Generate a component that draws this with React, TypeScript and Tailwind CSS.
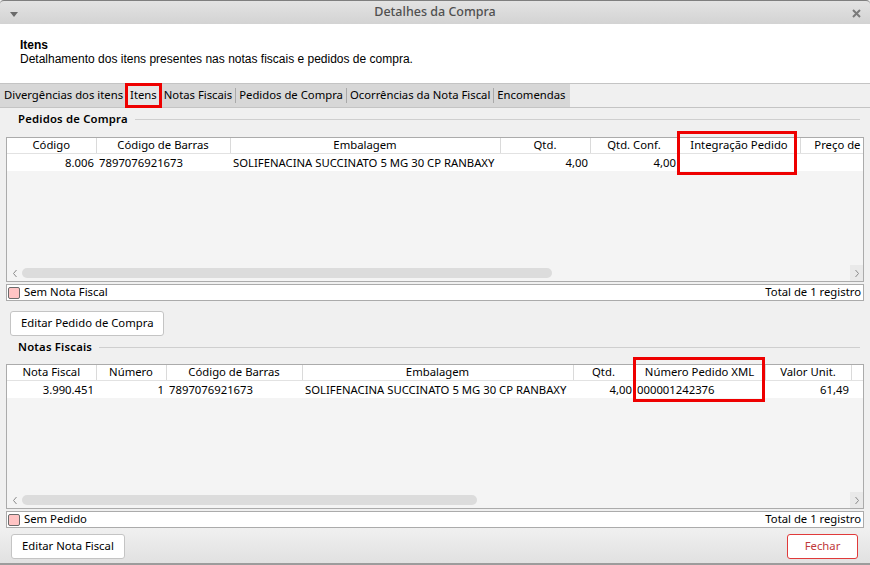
import React from 'react';

interface Col {
  label: string;
  w: string;
  value: string;
  align: 'left' | 'right';
}

const pedidoCols: Col[] = [
  { label: 'Código', w: 'w-[89px]', value: '8.006', align: 'right' },
  { label: 'Código de Barras', w: 'w-[134px]', value: '7897076921673', align: 'left' },
  { label: 'Embalagem', w: 'w-[270px]', value: 'SOLIFENACINA SUCCINATO 5 MG 30 CP RANBAXY', align: 'left' },
  { label: 'Qtd.', w: 'w-[90px]', value: '4,00', align: 'right' },
  { label: 'Qtd. Conf.', w: 'w-[88px]', value: '4,00', align: 'right' },
  { label: 'Integração Pedido', w: 'w-[122px]', value: '', align: 'left' },
  { label: 'Preço de Compra', w: 'w-[120px]', value: '', align: 'right' },
];

const notaCols: Col[] = [
  { label: 'Nota Fiscal', w: 'w-[89px]', value: '3.990.451', align: 'right' },
  { label: 'Número', w: 'w-[70px]', value: '1', align: 'right' },
  { label: 'Código de Barras', w: 'w-[136px]', value: '7897076921673', align: 'left' },
  { label: 'Embalagem', w: 'w-[271px]', value: 'SOLIFENACINA SUCCINATO 5 MG 30 CP RANBAXY', align: 'left' },
  { label: 'Qtd.', w: 'w-[61px]', value: '4,00', align: 'right' },
  { label: 'Número Pedido XML', w: 'w-[131px]', value: '000001242376', align: 'left' },
  { label: 'Valor Unit.', w: 'w-[86px]', value: '61,49', align: 'right' },
  { label: '', w: 'w-[12px]', value: '', align: 'left' },
];

const Chevron = ({ dir }: { dir: 'left' | 'right' }) => (
  <svg width="6" height="9" viewBox="0 0 6 9">
    <polyline
      points={dir === 'left' ? '4.5,1 1.5,4.5 4.5,8' : '1.5,1 4.5,4.5 1.5,8'}
      fill="none"
      stroke="#8a8a8a"
      strokeWidth="1"
    />
  </svg>
);

// the grid with its horizontal scroll bar; columns past the right edge are clipped
const GridTable: React.FC<{ cols: Col[]; tableW: string; thumbW: string; children?: React.ReactNode }> = ({
  cols,
  tableW,
  thumbW,
  children,
}) => (
  <div className="relative h-[145px]">
    <div className="flex h-full flex-col overflow-hidden border border-[#ababab] bg-[#f4f4f4]">
      <table className={`table-fixed border-collapse ${tableW}`}>
        <colgroup>
          {cols.map((c, i) => (
            <col key={i} className={c.w} />
          ))}
        </colgroup>
        <thead>
          <tr>
            {cols.map((c, i) => (
              <th
                key={i}
                className="h-[15px] overflow-hidden whitespace-nowrap border-r border-b border-r-[#dadada] border-b-[#e2e2e2] bg-white px-1 text-center font-normal leading-[14px]"
              >
                {c.label}
              </th>
            ))}
          </tr>
        </thead>
        <tbody>
          <tr>
            {cols.map((c, i) => (
              <td
                key={i}
                className={`h-[18px] overflow-hidden whitespace-nowrap bg-white leading-[17px] ${
                  c.align === 'right' ? 'pr-[2px] text-right' : 'pl-[3px] text-left'
                }`}
              >
                {c.value}
              </td>
            ))}
          </tr>
        </tbody>
      </table>
      <div className="flex-1" />
      <div className="flex h-[16px] items-center">
        <div className="flex w-[15px] justify-center">
          <Chevron dir="left" />
        </div>
        <div className={`h-[10px] rounded-full bg-[#dcdcdc] ${thumbW}`} />
        <div className="flex-1" />
        <div className="flex h-full w-[13px] items-center justify-center bg-[#e9e9e9]">
          <Chevron dir="right" />
        </div>
      </div>
    </div>
    {children}
  </div>
);

const StatusBar = ({ label }: { label: string }) => (
  <div className="mt-[2px] flex h-[17px] items-center justify-between border border-[#ababab] bg-white pl-[1px] pr-[2px]">
    <div className="flex items-center gap-[4px]">
      <span className="h-[12px] w-[12px] rounded-[2px] border border-[#6a6a6a] bg-[#ffc4c4]" />
      <span>{label}</span>
    </div>
    <span>Total de 1 registro</span>
  </div>
);

const SectionTitle = ({ title, className }: { title: string; className: string }) => (
  <div className={`flex h-[18px] items-center gap-[7px] pl-[12px] pr-[4px] ${className}`}>
    <span className="font-semibold tracking-[0.2px]">{title}</span>
    <div className="h-px flex-1 bg-[#cfcfcf]" />
  </div>
);

const tabs = ['Divergências dos itens', 'Itens', 'Notas Fiscais', 'Pedidos de Compra', 'Ocorrências da Nota Fiscal', 'Encomendas'];

export default function App() {
  return (
    <div className="flex h-[565px] w-[870px] flex-col overflow-hidden bg-[#f0f0f0] font-['Noto_Sans',sans-serif] text-[11.3px] text-black">
      {/* window title */}
      <div className="relative flex h-[24px] shrink-0 items-center justify-center rounded-t-[4px] border-t border-[#7f7f7f] bg-linear-to-b from-[#e3e3e3] to-[#d3d3d3]">
        <svg className="absolute left-[10px] top-[11px]" width="8" height="6" viewBox="0 0 8 6">
          <polygon points="0,0 8,0 4,5" fill="#6a6a6a" />
        </svg>
        <span className="text-[12.5px] font-medium text-[#505050]">Detalhes da Compra</span>
        <svg className="absolute right-[9px] top-[8px]" width="9" height="9" viewBox="0 0 9 9">
          <path d="M1 1 L8 8 M8 1 L1 8" stroke="#7a7a7a" strokeWidth="2" />
        </svg>
      </div>

      {/* header */}
      <div className="h-[59px] shrink-0 bg-white pl-[20px] pt-[14px]">
        <div className="font-['Liberation_Sans',sans-serif] text-[12px] font-bold leading-[14px]">Itens</div>
        <div className="font-['Liberation_Sans',sans-serif] text-[12px] leading-[14px]">
          Detalhamento dos itens presentes nas notas fiscais e pedidos de compra.
        </div>
      </div>

      {/* tabs */}
      <div className="flex h-[25px] shrink-0 border-y border-[#c4c4c4]">
        <div className="flex items-center bg-[#d7d7d7] pl-[1px] pr-[2px]">
          {tabs.map((t, i) => (
            <React.Fragment key={t}>
              {i > 0 && <span className="h-[15px] w-px bg-[#a9a9a9]" />}
              <div
                className={`relative flex h-full items-center px-[3px] ${t === 'Itens' ? 'bg-[#e6e6e6]' : ''}`}
              >
                {t}
                {t === 'Itens' && (
                  <span className="absolute -left-[2px] -right-[2px] -top-[1px] -bottom-[1px] border-[3px] border-[#ee0000]" />
                )}
              </div>
            </React.Fragment>
          ))}
        </div>
        <div className="flex-1" />
      </div>

      {/* content */}
      <div className="flex flex-col px-[6px] pt-[2px]">
        <SectionTitle title="Pedidos de Compra" className="" />
        <div className="mt-[9px]">
          <GridTable cols={pedidoCols} tableW="w-[913px]" thumbW="w-[530px]">
            <span className="absolute left-[671px] -top-[6px] h-[44px] w-[120px] border-[3px] border-[#ee0000]" />
          </GridTable>
        </div>
        <StatusBar label="Sem Nota Fiscal" />

        <div className="mt-[10px] pl-[4px]">
          <button className="h-[25px] rounded-[3px] border border-[#c4c4c4] bg-white px-[10px]">
            Editar Pedido de Compra
          </button>
        </div>

        <SectionTitle title="Notas Fiscais" className="mt-[2px]" />
        <div className="mt-[8px]">
          <GridTable cols={notaCols} tableW="w-[856px]" thumbW="w-[455px]">
            <span className="absolute left-[627px] -top-[7px] h-[45px] w-[132px] border-[3px] border-[#ee0000]" />
          </GridTable>
        </div>
        <StatusBar label="Sem Pedido" />
      </div>

      {/* bottom buttons */}
      <div className="mt-auto flex h-[37px] shrink-0 items-start justify-between border-b-2 border-[#9c9c9c] bg-linear-to-b from-[#f0f0f0] to-[#e1e1e1] pl-[11px] pr-[12px] pt-[6px]">
        <button className="h-[25px] rounded-[3px] border border-[#c4c4c4] bg-white px-[10px]">
          Editar Nota Fiscal
        </button>
        <button className="h-[25px] w-[71px] rounded-[3px] border border-[#e03a3a] bg-white text-[#c0393b]">
          Fechar
        </button>
      </div>
    </div>
  );
}
